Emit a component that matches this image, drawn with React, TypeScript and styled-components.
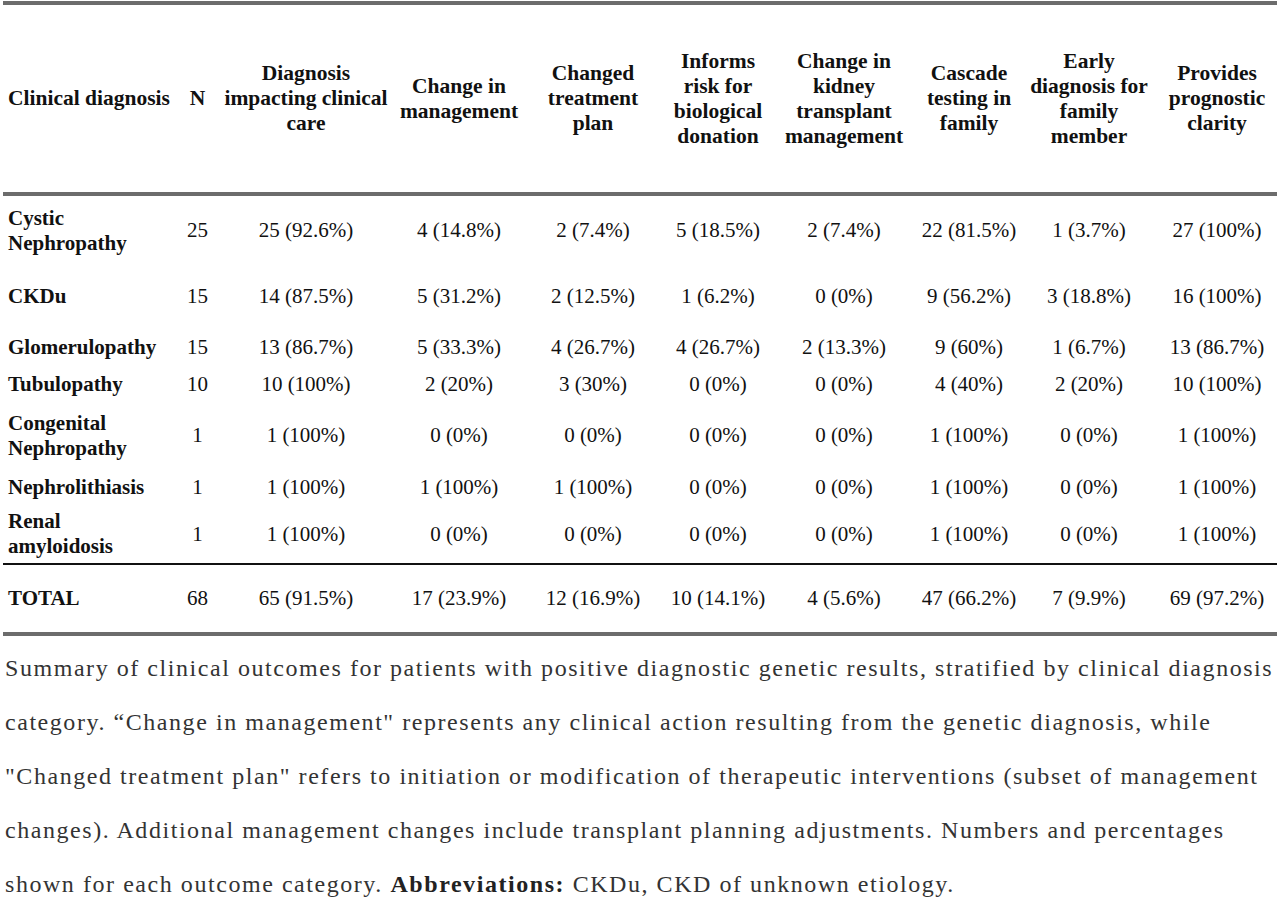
import * as React from "react";
import styled, { createGlobalStyle } from "styled-components";

const GlobalStyle = createGlobalStyle`
  html, body {
    margin: 0;
    padding: 0;
    background: #ffffff;
  }
  body {
    font-family: "Liberation Serif", "Times New Roman", serif;
    color: #111111;
  }
`;

// column widths (px), first column is the row label
const COLUMNS = [177, 35, 182, 124, 144, 106, 146, 104, 136, 120];

const HEADERS: string[][] = [
  ["Clinical diagnosis"],
  ["N"],
  ["Diagnosis", "impacting clinical", "care"],
  ["Change in", "management"],
  ["Changed", "treatment", "plan"],
  ["Informs", "risk for", "biological", "donation"],
  ["Change in", "kidney", "transplant", "management"],
  ["Cascade", "testing in", "family"],
  ["Early", "diagnosis for", "family", "member"],
  ["Provides", "prognostic", "clarity"],
];

interface IRow {
  label: string[];
  height: number;
  values: string[];
}

const ROWS: IRow[] = [
  {
    label: ["Cystic", "Nephropathy"],
    height: 71,
    values: ["25", "25 (92.6%)", "4 (14.8%)", "2 (7.4%)", "5 (18.5%)", "2 (7.4%)", "22 (81.5%)", "1 (3.7%)", "27 (100%)"],
  },
  {
    label: ["CKDu"],
    height: 62,
    values: ["15", "14 (87.5%)", "5 (31.2%)", "2 (12.5%)", "1 (6.2%)", "0 (0%)", "9 (56.2%)", "3 (18.8%)", "16 (100%)"],
  },
  {
    label: ["Glomerulopathy"],
    height: 41,
    values: ["15", "13 (86.7%)", "5 (33.3%)", "4 (26.7%)", "4 (26.7%)", "2 (13.3%)", "9 (60%)", "1 (6.7%)", "13 (86.7%)"],
  },
  {
    label: ["Tubulopathy"],
    height: 33,
    values: ["10", "10 (100%)", "2 (20%)", "3 (30%)", "0 (0%)", "0 (0%)", "4 (40%)", "2 (20%)", "10 (100%)"],
  },
  {
    label: ["Congenital", "Nephropathy"],
    height: 69,
    values: ["1", "1 (100%)", "0 (0%)", "0 (0%)", "0 (0%)", "0 (0%)", "1 (100%)", "0 (0%)", "1 (100%)"],
  },
  {
    label: ["Nephrolithiasis"],
    height: 35,
    values: ["1", "1 (100%)", "1 (100%)", "1 (100%)", "0 (0%)", "0 (0%)", "1 (100%)", "0 (0%)", "1 (100%)"],
  },
  {
    label: ["Renal", "amyloidosis"],
    height: 59,
    values: ["1", "1 (100%)", "0 (0%)", "0 (0%)", "0 (0%)", "0 (0%)", "1 (100%)", "0 (0%)", "1 (100%)"],
  },
];

const TOTAL: IRow = {
  label: ["TOTAL"],
  height: 70,
  values: ["68", "65 (91.5%)", "17 (23.9%)", "12 (16.9%)", "10 (14.1%)", "4 (5.6%)", "47 (66.2%)", "7 (9.9%)", "69 (97.2%)"],
};

const CAPTION_LINES: string[] = [
  "Summary of clinical outcomes for patients with positive diagnostic genetic results, stratified by clinical diagnosis",
  "category. \u201cChange in management\" represents any clinical action resulting from the genetic diagnosis, while",
  "\"Changed treatment plan\" refers to initiation or modification of therapeutic interventions (subset of management",
  "changes). Additional management changes include transplant planning adjustments. Numbers and percentages",
];

// Styling
const Page = styled.div`
  width: 1280px;
  padding: 1px 3px 0 3px;
  box-sizing: border-box;
`;

const Table = styled.table`
  width: 1274px;
  table-layout: fixed;
  border-collapse: collapse;
  font-family: "Liberation Serif", "Times New Roman", serif;
  font-size: 21px;
  color: #111111;
`;

const Line = styled.span`
  display: block;
  white-space: nowrap;
`;

const HeadCell = styled.th<{ $first?: boolean }>`
  height: 187px;
  padding: 0;
  border-top: 4px solid #6c6c6c;
  border-bottom: 4px solid #6c6c6c;
  font-size: 21.5px;
  font-weight: bold;
  line-height: 25px;
  vertical-align: middle;
  text-align: ${(p) => (p.$first ? "left" : "center")};
  padding-left: ${(p) => (p.$first ? "5px" : "0")};
`;

const BodyRow = styled.tr<{ $height: number; $last?: boolean }>`
  height: ${(p) => p.$height}px;

  td {
    border-bottom: ${(p) => (p.$last ? "2px solid #111111" : "none")};
  }
`;

const TotalRow = styled.tr<{ $height: number }>`
  height: ${(p) => p.$height}px;

  td {
    border-bottom: 4px solid #6c6c6c;
  }
`;

const LabelCell = styled.td`
  padding: 0 0 0 5px;
  font-weight: bold;
  line-height: 25px;
  text-align: left;
  vertical-align: middle;
`;

const ValueCell = styled.td`
  padding: 0;
  line-height: 25px;
  text-align: center;
  vertical-align: middle;
  white-space: nowrap;
`;

const Caption = styled.div`
  margin-top: 5px;
  padding-left: 2px;
  font-family: "Liberation Serif", "Times New Roman", serif;
  font-size: 24px;
  letter-spacing: 1.55px;
  line-height: 54px;
  color: #333333;
`;

const CaptionLine = styled.div`
  white-space: nowrap;
`;

const Strong = styled.strong`
  font-weight: bold;
  color: #222222;
`;

const Lines = ({ lines }: { lines: string[] }) => (
  <>
    {lines.map((line, i) => (
      <Line key={i}>{line}</Line>
    ))}
  </>
);

export default function App() {
  return (
    <Page>
      <GlobalStyle />
      <Table>
        <colgroup>
          {COLUMNS.map((w, i) => (
            <col key={i} style={{ width: w }} />
          ))}
        </colgroup>
        <thead>
          <tr>
            {HEADERS.map((h, i) => (
              <HeadCell key={i} $first={i === 0}>
                <Lines lines={h} />
              </HeadCell>
            ))}
          </tr>
        </thead>
        <tbody>
          {ROWS.map((row, r) => (
            <BodyRow key={r} $height={row.height} $last={r === ROWS.length - 1}>
              <LabelCell>
                <Lines lines={row.label} />
              </LabelCell>
              {row.values.map((v, i) => (
                <ValueCell key={i}>{v}</ValueCell>
              ))}
            </BodyRow>
          ))}
        </tbody>
        <tfoot>
          <TotalRow $height={TOTAL.height}>
            <LabelCell>
              <Lines lines={TOTAL.label} />
            </LabelCell>
            {TOTAL.values.map((v, i) => (
              <ValueCell key={i}>{v}</ValueCell>
            ))}
          </TotalRow>
        </tfoot>
      </Table>
      <Caption>
        {CAPTION_LINES.map((line, i) => (
          <CaptionLine key={i}>{line}</CaptionLine>
        ))}
        <CaptionLine>
          shown for each outcome category. <Strong>Abbreviations:</Strong> CKDu, CKD of unknown etiology.
        </CaptionLine>
      </Caption>
    </Page>
  );
}
